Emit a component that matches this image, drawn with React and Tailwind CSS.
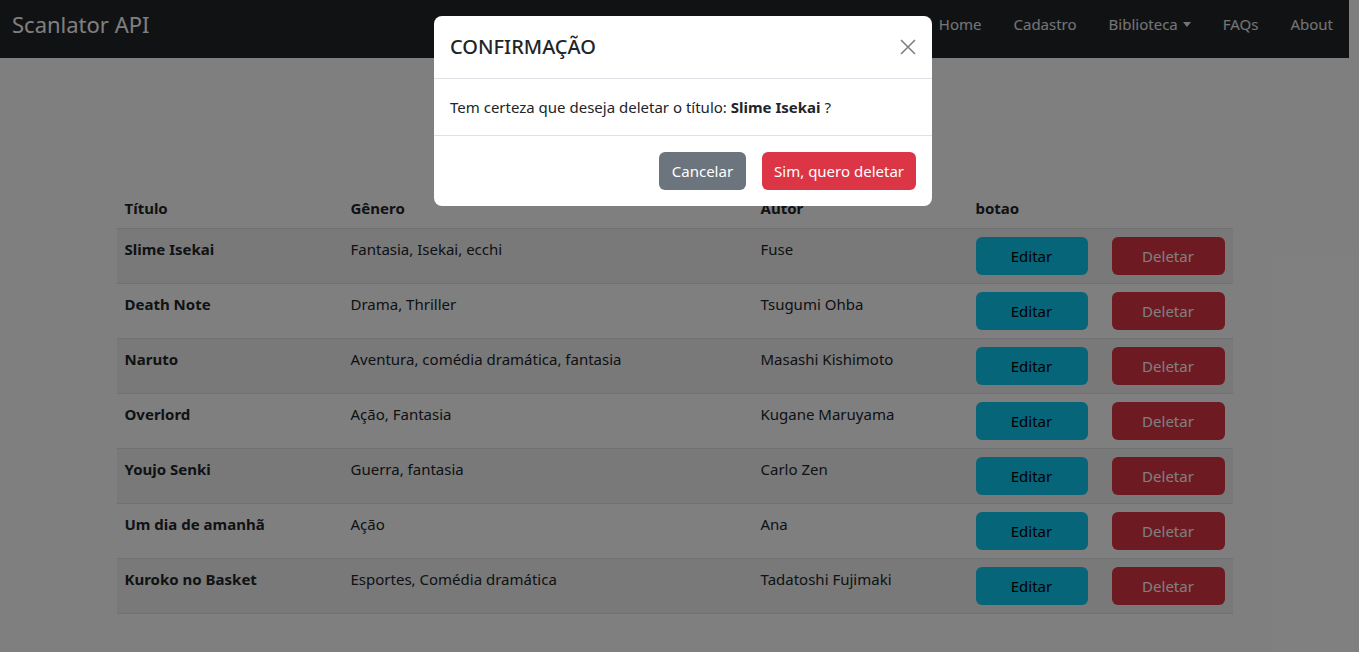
import React from "react";

const mangas = [
  { titulo: "Slime Isekai", genero: "Fantasia, Isekai, ecchi", autor: "Fuse" },
  { titulo: "Death Note", genero: "Drama, Thriller", autor: "Tsugumi Ohba" },
  { titulo: "Naruto", genero: "Aventura, comédia dramática, fantasia", autor: "Masashi Kishimoto" },
  { titulo: "Overlord", genero: "Ação, Fantasia", autor: "Kugane Maruyama" },
  { titulo: "Youjo Senki", genero: "Guerra, fantasia", autor: "Carlo Zen" },
  { titulo: "Um dia de amanhã", genero: "Ação", autor: "Ana" },
  { titulo: "Kuroko no Basket", genero: "Esportes, Comédia dramática", autor: "Tadatoshi Fujimaki" },
];

const links = ["Home", "Cadastro", "Biblioteca", "FAQs", "About"];

const Navbar = () => (
  <nav className="h-[58px] bg-[#212529] flex items-center justify-between pl-3 pb-[10px]">
    <span className="text-[22px] text-white leading-[30px]">Scanlator API</span>
    <ul className="flex items-center">
      {links.map((l) => (
        <li key={l} className="px-4 text-white/90 leading-6 flex items-center">
          {l}
          {l === "Biblioteca" && (
            <span className="ml-[5px] mt-[1px] inline-block border-t-[5px] border-x-[4px] border-x-transparent border-t-white/90" />
          )}
        </li>
      ))}
    </ul>
  </nav>
);

const Table = () => (
  <div className="w-[1116px] mx-auto mt-[130px] text-[#212529]">
    <div className="grid grid-cols-[226px_410px_215px_136px_129px] border-b border-[#dee2e6] font-bold">
      <div className="p-2 leading-6">Título</div>
      <div className="p-2 leading-6">Gênero</div>
      <div className="p-2 leading-6">Autor</div>
      <div className="p-2 leading-6">botao</div>
      <div className="p-2 leading-6"></div>
    </div>
    {mangas.map((m, i) => (
      <div
        key={m.titulo}
        className={`grid grid-cols-[226px_410px_215px_136px_129px] border-b border-[#dee2e6] ${
          i % 2 === 0 ? "bg-[#f2f2f2]" : "bg-white"
        }`}
      >
        <div className="px-2 pt-2 leading-6 font-bold">{m.titulo}</div>
        <div className="px-2 pt-2 leading-6">{m.genero}</div>
        <div className="px-2 pt-2 leading-6">{m.autor}</div>
        <div className="p-2">
          <button className="w-[112px] h-[38px] rounded-md bg-[#0dcaf0] text-black">Editar</button>
        </div>
        <div className="p-2">
          <button className="w-[113px] h-[38px] rounded-md bg-[#dc3545] text-white">Deletar</button>
        </div>
      </div>
    ))}
  </div>
);

const Modal = () => (
  <div className="absolute left-[434px] top-[16px] w-[498px] bg-white rounded-lg text-[#212529]">
    <div className="flex items-center justify-between px-4 py-4 border-b border-[#dee2e6]">
      <h5 className="text-[20px] font-medium leading-[30px]">CONFIRMAÇÃO</h5>
      <button className="w-4 h-4 text-[#808080]">
        <svg viewBox="0 0 16 16" className="w-4 h-4" fill="none" stroke="currentColor" strokeWidth="1.6">
          <path d="M1 1L15 15M15 1L1 15" />
        </svg>
      </button>
    </div>
    <div className="p-4 leading-6 border-b border-[#dee2e6]">
      Tem certeza que deseja deletar o título: <b>Slime Isekai</b> ?
    </div>
    <div className="flex justify-end gap-4 px-4 pt-4 pb-4">
      <button className="h-[38px] px-[13px] rounded-md bg-[#6c757d] text-white">Cancelar</button>
      <button className="h-[38px] px-3 rounded-md bg-[#dc3545] text-white">Sim, quero deletar</button>
    </div>
  </div>
);

export default function App() {
  return (
    <div className="relative h-[652px] overflow-hidden bg-white pr-[10px] font-['Segoe_UI','Noto_Sans',sans-serif] text-[15px]">
      <Navbar />
      <Table />
      <div className="absolute inset-0 bg-black/50" />
      <Modal />
    </div>
  );
}
